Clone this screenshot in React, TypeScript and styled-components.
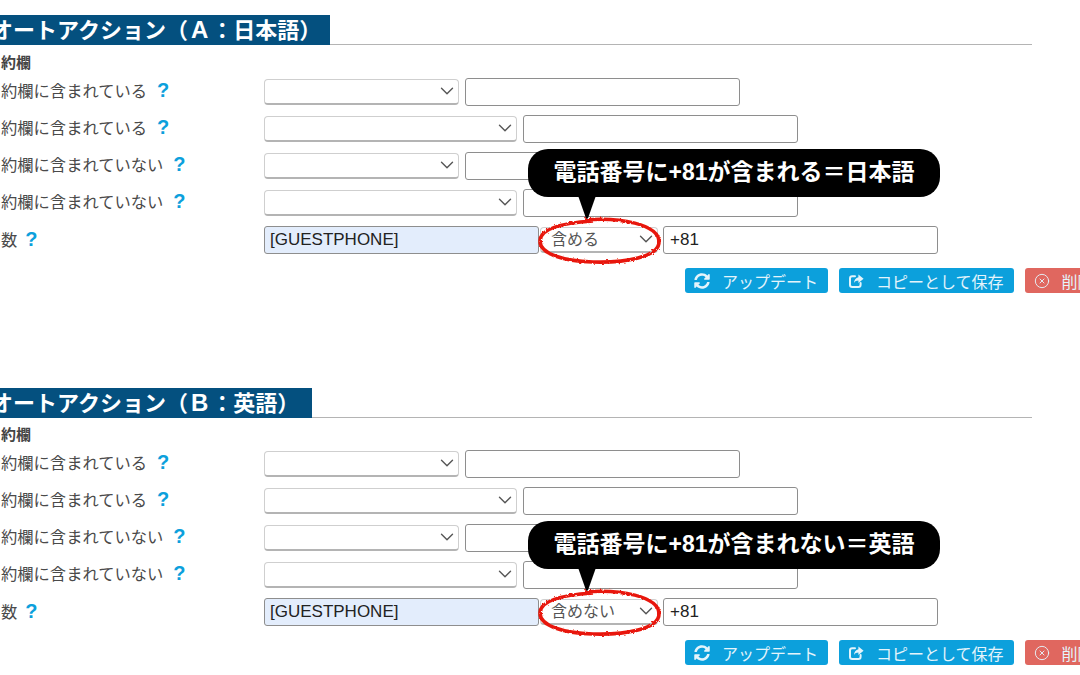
import { FaSyncAlt } from 'react-icons/fa';
import { ChevronDown, CircleX } from 'lucide-react';
import styled, { createGlobalStyle } from 'styled-components';

type Rule = { label: string; wide: boolean };

const rules: Rule[] = [
  { label: '約欄に含まれている', wide: false },
  { label: '約欄に含まれている', wide: true },
  { label: '約欄に含まれていない', wide: false },
  { label: '約欄に含まれていない', wide: true },
];

const ShareIcon = () => (
  <svg viewBox="0 0 16 16" width="16" height="16" fill="none">
    <path
      d="M7 3.2H4.2C2.9 3.2 2 4.1 2 5.4v6.4C2 13.1 2.9 14 4.2 14h6.2c1.3 0 2.2-.9 2.2-2.2V10"
      stroke="currentColor"
      strokeWidth="2"
      strokeLinecap="round"
    />
    <path d="M10.4 1.6L15.6 5.8L10.4 10V7.6C8.4 7.6 7 8.4 6 10C6 7 7.8 4.6 10.4 4.2Z" fill="currentColor" />
  </svg>
);

const Actions = () => (
  <ButtonRow>
    <ActionButton>
      <FaSyncAlt size={16} />
      アップデート
    </ActionButton>
    <ActionButton>
      <ShareIcon />
      コピーとして保存
    </ActionButton>
    <ActionButton $danger>
      <CircleX size={16} strokeWidth={1.4} />
      削除
    </ActionButton>
  </ButtonRow>
);

const RedCircle = () => (
  <Circle viewBox="0 0 126 50" width="126" height="50">
    <defs>
      <filter id="rough" x="-10%" y="-20%" width="120%" height="140%">
        <feTurbulence type="fractalNoise" baseFrequency="0.4" numOctaves="2" seed="4" />
        <feDisplacementMap in="SourceGraphic" scale="3" />
      </filter>
    </defs>
    <path
      d="M48 4C82 1 122 8 122 26C122 41 88 47 56 46C26 45 3 38 3 25C3 13 24 7 56 5"
      fill="none"
      stroke="#e8190a"
      strokeWidth="3.6"
      filter="url(#rough)"
    />
  </Circle>
);

type SectionProps = {
  letter: string;
  language: string;
  titleEnd: number;
  choice: string;
  note: string;
  headGap: number;
};

const ActionSection = ({ letter, language, titleEnd, choice, note, headGap }: SectionProps) => (
  <Section>
    <TitleLine>
      <Title $end={titleEnd}>
        オートアクション（<TitleLetter>{letter}</TitleLetter>：{language}）
      </Title>
    </TitleLine>
    <SubHeading $gap={headGap}>約欄</SubHeading>
    {rules.map((rule, index) => (
      <Row key={index}>
        <Label>
          {rule.label}
          <Help>?</Help>
        </Label>
        <SelectBox $wide={rule.wide}>
          <Select />
          <Chevron size={22} strokeWidth={1.5} />
        </SelectBox>
        <TextInput />
      </Row>
    ))}
    <Row>
      <CountLabel>
        数<Help>?</Help>
      </CountLabel>
      <VarInput defaultValue="[GUESTPHONE]" />
      <ChoiceBox>
        <Select defaultValue={choice}>
          <option>{choice}</option>
        </Select>
        <Chevron size={22} strokeWidth={1.5} />
        <RedCircle />
        <Callout>{note}</Callout>
      </ChoiceBox>
      <TextInput defaultValue="+81" />
    </Row>
    <Actions />
  </Section>
);

export default function App() {
  return (
    <Page>
      <GlobalStyle />
      <ActionSection
        letter="A"
        language="日本語"
        titleEnd={9}
        choice="含める"
        note="電話番号に+81が含まれる＝日本語"
        headGap={8}
      />
      <ActionSection
        letter="B"
        language="英語"
        titleEnd={13}
        choice="含めない"
        note="電話番号に+81が含まれない＝英語"
        headGap={7}
      />
    </Page>
  );
}

const GlobalStyle = createGlobalStyle`
  html, body {
    margin: 0;
    background: #ffffff;
    font-family: "Liberation Sans", "Noto Sans CJK JP", sans-serif;
  }
`;

const Page = styled.div`
  width: 1080px;
  height: 675px;
  overflow: hidden;
  padding-top: 15px;
  box-sizing: border-box;
`;

const Section = styled.section`
  height: 373px;
`;

const TitleLine = styled.div`
  width: 1032px;
  height: 30px;
  border-bottom: 1px solid #b4b4b4;
  box-sizing: border-box;
`;

const Title = styled.h2<{ $end: number }>`
  display: inline-block;
  margin: 0 0 0 -9px;
  padding: 0 ${(p) => p.$end}px 0 0;
  height: 30px;
  background: #04507f;
  color: #ffffff;
  font-size: 22px;
  font-weight: 700;
  line-height: 30px;
  white-space: nowrap;
`;

const TitleLetter = styled.span`
  margin: 0 3px;
  font-size: 24px;
`;

const SubHeading = styled.div<{ $gap: number }>`
  margin: ${(p) => p.$gap}px 0 0 1px;
  height: 20px;
  color: #444444;
  font-size: 15px;
  font-weight: 700;
  line-height: 20px;
`;

const Row = styled.div`
  display: flex;
  align-items: center;
  height: 37px;
`;

const Label = styled.div`
  flex: 0 0 264px;
  box-sizing: border-box;
  padding-left: 1px;
  margin-top: -3px;
  display: flex;
  align-items: center;
  color: #4a4a4a;
  font-size: 16.3px;
  white-space: nowrap;
`;

const CountLabel = styled(Label)`
  margin-top: -1px;

  & > span {
    margin-left: 8px;
  }
`;

const Help = styled.span`
  margin-left: 10px;
  color: #0ca0dc;
  font-size: 20px;
  font-weight: 700;
  line-height: 20px;
`;

const SelectBox = styled.div<{ $wide: boolean }>`
  position: relative;
  width: ${(p) => (p.$wide ? 253 : 195)}px;
  height: 26px;
  margin-right: 6px;
`;

const ChoiceBox = styled.div`
  position: relative;
  width: 118px;
  height: 26px;
  margin: 0 5px 0 1px;
`;

const Select = styled.select`
  appearance: none;
  display: block;
  width: 100%;
  height: 100%;
  padding: 0 0 0 10px;
  background: #ffffff;
  border: 1px solid #cfcfcf;
  border-bottom: 2px solid #b4b4b4;
  border-radius: 4px;
  color: #555555;
  font-family: inherit;
  font-size: 16px;
  outline: none;
`;

const Chevron = styled(ChevronDown)`
  position: absolute;
  top: 1px;
  right: 1px;
  color: #555555;
  pointer-events: none;
`;

const TextInput = styled.input`
  box-sizing: border-box;
  width: 275px;
  height: 28px;
  padding: 0 6px;
  background: #ffffff;
  border: 1px solid #8e8e8e;
  border-radius: 3px;
  color: #222222;
  font-family: inherit;
  font-size: 17px;
  outline: none;
`;

const VarInput = styled(TextInput)`
  background: #e3edfc;
  padding: 0 5px;
`;

const Circle = styled.svg`
  position: absolute;
  top: -11px;
  left: -3px;
  pointer-events: none;
`;

const Callout = styled.div`
  position: absolute;
  bottom: 56px;
  left: -12px;
  box-sizing: border-box;
  width: 412px;
  height: 48px;
  background: #000000;
  border-radius: 20px;
  color: #ffffff;
  font-size: 23px;
  font-weight: 700;
  line-height: 46px;
  text-align: center;
  white-space: nowrap;

  &::after {
    content: '';
    position: absolute;
    top: 47px;
    left: 50px;
    width: 18px;
    height: 23px;
    background: #000000;
    clip-path: polygon(0 0, 100% 0, 55% 100%, 45% 100%);
  }
`;

const ButtonRow = styled.div`
  display: flex;
  gap: 11px;
  margin: 10px 0 0 685px;
`;

const ActionButton = styled.button<{ $danger?: boolean }>`
  flex: none;
  display: flex;
  align-items: center;
  gap: 12px;
  height: 25px;
  padding: 0 10px 0 9px;
  background: ${(p) => (p.$danger ? '#e0675f' : '#0ca0dc')};
  border: none;
  border-radius: 3px;
  color: #e4f4fb;
  font-family: inherit;
  font-size: 16px;
  white-space: nowrap;
`;
